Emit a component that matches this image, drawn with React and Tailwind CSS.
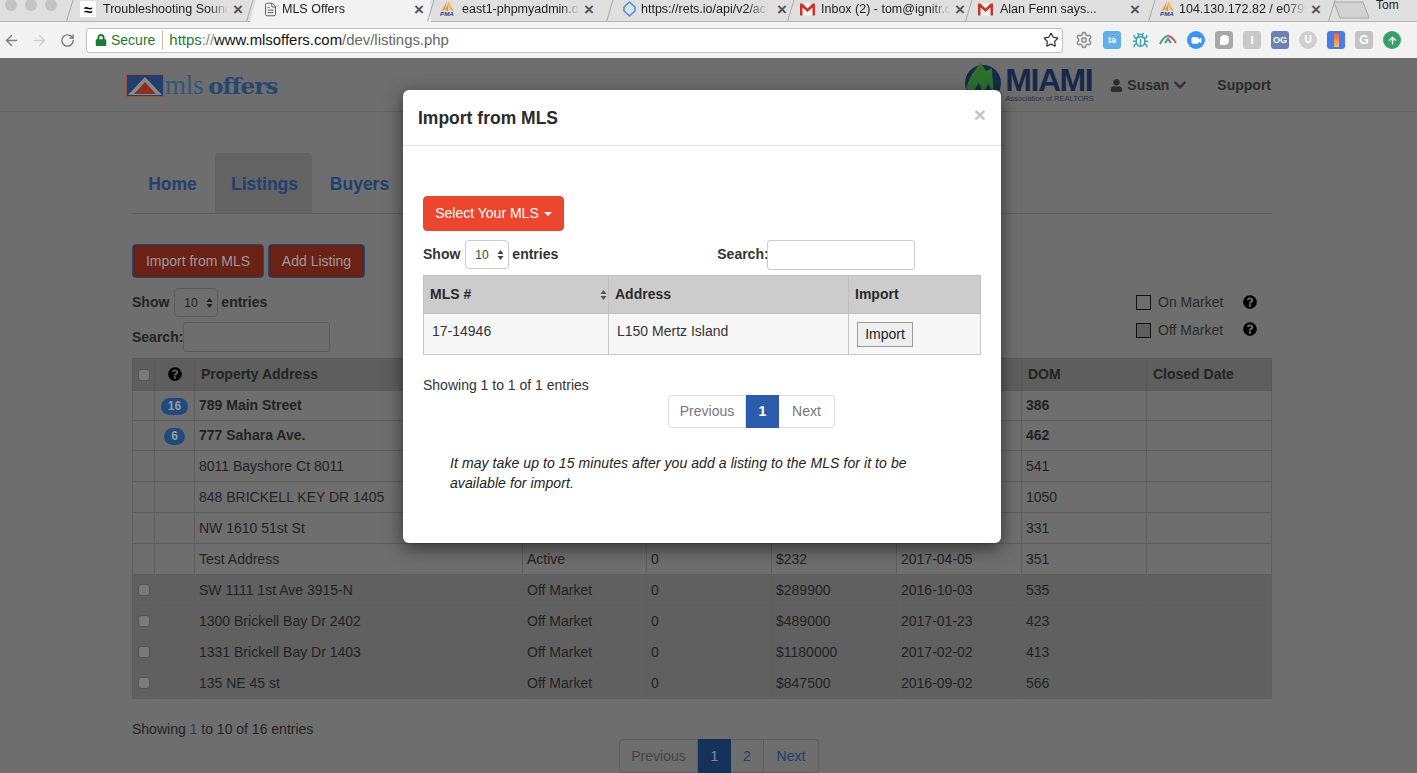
import React from 'react';
import { ArrowLeft, ArrowRight, RotateCw, Star, FileText, Settings, Bug, Video } from 'lucide-react';
import { FaLock, FaUser, FaChevronDown, FaQuestionCircle, FaArrowUp } from 'react-icons/fa';

const Pma = () => (
  <svg width="18" height="18" viewBox="0 0 18 18">
    <path d="M8 0 L5 10 L2 11 Z M10 0 L9 11 L6 11 Z" fill="#f08a1d" />
    <path d="M10.5 1 L15 11 L11 10.5 Z" fill="#f5b041" />
    <text x="0" y="17" fontSize="7" fontWeight="700" fontStyle="italic" fill="#1c3f94" fontFamily="Liberation Sans">PMA</text>
  </svg>
);
const Gmail = () => (
  <svg width="15" height="13" viewBox="0 0 15 13">
    <rect x="0" y="0.5" width="15" height="12" fill="#f2f2f2" />
    <path d="M0 .5 H2.5 L7.5 5.5 L12.5 .5 H15 V12.5 H12.5 V4.5 L7.5 9 L2.5 4.5 V12.5 H0 Z" fill="#c5352a" />
  </svg>
);
const Rets = () => (
  <svg width="15" height="16" viewBox="0 0 15 16">
    <path d="M7.5 1 L13 6 L13 10 L7.5 15 L2 10 L2 6 Z" fill="none" stroke="#4a90d9" strokeWidth="1.6" strokeLinejoin="round" />
  </svg>
);
const Wave = () => (
  <span className="flex h-4 w-4 items-center justify-center bg-white text-[15px] font-bold leading-none text-black">≈</span>
);

const tabs = [
  { w: 'w-[180px]', icon: <Wave />, pad: 'pl-[10px]', gap: 'ml-[7px]', text: 'Troubleshooting Sound Issues', tw: 'w-[125px]' },
  { w: 'w-[181px]', icon: <FileText size={15} strokeWidth={1.3} color="#444" />, pad: 'pl-[12px]', gap: 'ml-[4px]', text: 'MLS Offers', tw: 'w-[127px]', active: true },
  { w: 'w-[179px]', icon: <Pma />, pad: 'pl-[9px]', gap: 'ml-[6px]', text: 'east1-phpmyadmin.dreamhost.com', tw: 'w-[117px]' },
  { w: 'w-[181px]', icon: <Rets />, pad: 'pl-[11px]', gap: 'ml-[4px]', text: 'https://rets.io/api/v2/actris', tw: 'w-[127px]', xgap: 'ml-[9px]' },
  { w: 'w-[178px]', icon: <Gmail />, pad: 'pl-[8px]', gap: 'ml-[6px]', text: 'Inbox (2) - tom@ignitr.com', tw: 'w-[129px]' },
  { w: 'w-[183px]', icon: <Gmail />, pad: 'pl-[8px]', gap: 'ml-[7px]', text: 'Alan Fenn says...', tw: 'w-[125px]' },
  { w: 'w-[180px]', icon: <Pma />, pad: 'pl-[8px]', gap: 'ml-[3px]', text: '104.130.172.82 / e0799c8', tw: 'w-[127px]' },
];

function Tab({ t }) {
  return (
    <div className={`relative flex h-[22px] shrink-0 items-center pb-[4px] ${t.w} ${t.pad} ${t.active ? 'bg-[#f2f2f2] [clip-path:polygon(0_100%,6px_0,calc(100%-1px)_0,calc(100%+0px)_100%)]' : ''}`}>
      <span className="flex w-[16px] shrink-0 items-center justify-center">{t.icon}</span>
      <span className={`${t.gap} ${t.tw} shrink-0 overflow-hidden whitespace-nowrap text-[12.5px] leading-[14px] text-[#222] [mask-image:linear-gradient(to_right,black_85%,transparent)]`}>{t.text}</span>
      <span className={`${t.xgap || 'ml-[5px]'} text-[17px] font-bold leading-none text-[#555]`}>×</span>
    </div>
  );
}

const Sep = () => (
  <svg width="8" height="22" viewBox="0 0 8 22" className="-mx-[4px] shrink-0 relative z-10">
    <path d="M0.5 21.5 L7 0" stroke="#a8a8a8" fill="none" />
  </svg>
);

function Ext({ children, className = '' }) {
  return <span className={`flex h-[18px] w-[18px] items-center justify-center rounded-[3px] text-[9px] font-bold leading-none text-white ${className}`}>{children}</span>;
}

function Chrome() {
  return (
    <header className="h-[59px] shrink-0 border-b border-[#6d6d6d] bg-[#f2f2f2] font-['Liberation_Sans',sans-serif]">
      <div className="flex h-[22px] items-start border-b border-[#b5b5b5] bg-[#dfdfdf]">
        <div className="flex w-[70px] shrink-0 gap-[8px] pl-[5px] pt-0">
          <span className="-mt-[1px] h-[12px] w-[12px] rounded-full bg-[#c4c4c4]" />
          <span className="-mt-[1px] h-[12px] w-[12px] rounded-full bg-[#c4c4c4]" />
          <span className="-mt-[1px] h-[12px] w-[12px] rounded-full bg-[#c4c4c4]" />
        </div>
        <div className="flex h-[22px] shrink-0 items-center">
          {tabs.map((t) => (
            <React.Fragment key={t.text}>
              <Sep />
              <Tab t={t} />
            </React.Fragment>
          ))}
          <Sep />
        </div>
        <svg width="38" height="18" viewBox="0 0 38 18" className="ml-[1px] mt-[1px] shrink-0">
          <path d="M1 1 H30 L36 17 H7 Z" fill="#d2d2d2" stroke="#a8a8a8" />
        </svg>
        <span className="ml-[5px] -mt-[2px] text-[12px] leading-[14px] text-[#222]">Tom</span>
      </div>
      <div className="flex h-[36px] items-center">
        <div className="flex w-[86px] shrink-0 items-center pl-[3px]">
          <ArrowLeft size={17} color="#808080" strokeWidth={2} />
          <ArrowRight size={17} color="#cfcfcf" strokeWidth={2} className="ml-[11px]" />
          <RotateCw size={15} color="#777" strokeWidth={2.2} className="ml-[12px]" />
        </div>
        <div className="flex h-[25px] w-[977px] shrink-0 items-center rounded-[3px] border border-[#bfbfbf] bg-white pl-[8px] pr-[4px] text-[14px] leading-none">
          <FaLock size={12} color="#1d7a33" />
          <span className="ml-[4px] text-[#1d7a33]">Secure</span>
          <span className="ml-[7px] h-[18px] w-px bg-[#bdbdbd]" />
          <span className="ml-[6px] text-[14.9px] text-[#1d7a33]">https</span>
          <span className="text-[14.9px] text-[#888]">://</span>
          <span className="text-[14.9px] text-[#111]">www.mlsoffers.com</span>
          <span className="text-[14.9px] text-[#666]">/dev/listings.php</span>
          <Star size={16} color="#333" strokeWidth={1.8} className="ml-auto -mr-[1px]" />
        </div>
        <div className="ml-[12px] flex items-center gap-[10px]">
          <Ext><Settings size={18} color="#8a8a8a" strokeWidth={2} /></Ext>
          <Ext className="bg-[#62aee8]">ta</Ext>
          <Ext><Bug size={17} color="#3f9fb0" /></Ext>
          <Ext>
            <svg width="18" height="10" viewBox="0 0 18 10"><path d="M1 9 C4 3 6 1 9 1" stroke="#4aa86a" strokeWidth="2" fill="none" /><path d="M9 1 C12 1 14 3 17 8" stroke="#d9574a" strokeWidth="2" fill="none" /><path d="M6 8 L9 4 L12 8" stroke="#3f87d9" strokeWidth="2" fill="none" /></svg>
          </Ext>
          <Ext className="rounded-full bg-[#3d95f2]"><Video size={11} fill="white" color="white" /></Ext>
          <Ext className="bg-[#a9a9a9]"><span className="h-[10px] w-[9px] rounded-[5px_5px_5px_1px] bg-white" /></Ext>
          <Ext className="bg-[#c8c8c8] text-[11px]">I</Ext>
          <Ext className="bg-[#6c83ad] text-[8px]">OG</Ext>
          <Ext className="rounded-full bg-[#cfcfcf] text-[10px]">U</Ext>
          <Ext className="bg-[#4c7be8]"><span className="h-[14px] w-[5px] bg-gradient-to-b from-[#e35d4f] to-[#f2c14e]" /></Ext>
          <Ext className="bg-[#c4c4c4] text-[12px]">G</Ext>
          <Ext className="rounded-full bg-[#37a06a]"><FaArrowUp size={9} color="white" /></Ext>
        </div>
      </div>
    </header>
  );
}

const Updown = ({ color = '#333' }) => (
  <svg width="7" height="12" viewBox="0 0 7 12" className="shrink-0">
    <path d="M3.5 1 L6.5 5 H.5 Z M3.5 11 L.5 7 H6.5 Z" fill={color} />
  </svg>
);

function LenSelect({ light }) {
  return (
    <span className={`ml-[5px] mr-[3px] flex h-[29px] w-[44px] items-center justify-between rounded-[4px] border pl-[9px] pr-[4px] text-[12px] font-normal ${light ? 'border-[#ccc] bg-white text-[#444]' : 'border-[#5b5b5b] text-[#222]'}`}>
      10 <Updown color={light ? '#444' : '#222'} />
    </span>
  );
}

const cols = ['w-[22px]', 'w-[40px]', 'w-[328px]', 'w-[124px]', 'w-[125px]', 'w-[125px]', 'w-[125px]', 'w-[125px]', 'w-[125px]'];
const rows = [
  { badge: '16', addr: '789 Main Street', st: 'Active', of: '16', pr: '$450000', dt: '2016-03-11', dom: '386', b: true },
  { badge: '6', addr: '777 Sahara Ave.', st: 'Active', of: '6', pr: '$325000', dt: '2016-01-29', dom: '462', b: true },
  { addr: '8011 Bayshore Ct 8011', st: 'Active', of: '0', pr: '$399000', dt: '2016-10-20', dom: '541' },
  { addr: '848 BRICKELL KEY DR 1405', st: 'Active', of: '0', pr: '$615000', dt: '2014-05-03', dom: '1050' },
  { addr: 'NW 1610 51st St', st: 'Active', of: '0', pr: '$120000', dt: '2016-05-28', dom: '331' },
  { addr: 'Test Address', st: 'Active', of: '0', pr: '$232', dt: '2017-04-05', dom: '351' },
  { addr: 'SW 1111 1st Ave 3915-N', st: 'Off Market', of: '0', pr: '$289900', dt: '2016-10-03', dom: '535', off: true },
  { addr: '1300 Brickell Bay Dr 2402', st: 'Off Market', of: '0', pr: '$489000', dt: '2017-01-23', dom: '423', off: true },
  { addr: '1331 Brickell Bay Dr 1403', st: 'Off Market', of: '0', pr: '$1180000', dt: '2017-02-02', dom: '413', off: true },
  { addr: '135 NE 45 st', st: 'Off Market', of: '0', pr: '$847500', dt: '2016-09-02', dom: '566', off: true },
];

const Box = () => <span className="block h-[12px] w-[12px] rounded-[3px] border border-[#555] bg-[#7a7a7a]" />;

function Listings() {
  const th = 'border border-[#5a5a5a] pl-[6px] text-left font-bold';
  const td = 'border border-[#5e5e5e] pl-[4px] align-middle';
  return (
    <table className="w-[1139px] table-fixed border-collapse text-[14px] text-[#232323]">
      <colgroup>{cols.map((c, i) => <col key={i} className={c} />)}</colgroup>
      <thead>
        <tr className="h-[32px] bg-[#5e5e5e]">
          <th className="border border-[#5a5a5a] pl-[5px]"><Box /></th>
          <th className="border border-[#5a5a5a]"><FaQuestionCircle size={14} color="#000" className="mx-auto -mt-[2px]" /></th>
          <th className={th}>Property Address</th>
          <th className={th}>Status</th>
          <th className={th}>Offers</th>
          <th className={th}>Price</th>
          <th className={th}>List Date</th>
          <th className={th}>DOM</th>
          <th className={th}>Closed Date</th>
        </tr>
      </thead>
      <tbody>
        {rows.map((r, i) => (
          <tr key={r.addr} className={`${i < 2 ? 'h-[30px]' : 'h-[31px]'} ${r.off ? 'bg-[#606060]' : 'bg-[#6e6e6e]'} ${r.b ? 'font-bold' : ''}`}>
            <td className={`${td} pl-[5px]`}>{r.off && <Box />}</td>
            <td className="border border-[#5e5e5e] text-center">
              {r.badge && (
                <span className={`inline-block h-[17px] rounded-full bg-[#1f4a7d] text-[12px] font-bold leading-[17px] text-[#9a9a9a] ${r.badge === '16' ? 'w-[27px]' : 'w-[21px]'}`}>{r.badge}</span>
              )}
            </td>
            <td className={td}>{r.addr}</td>
            <td className={td}>{r.st}</td>
            <td className={td}>{r.of}</td>
            <td className={td}>{r.pr}</td>
            <td className={td}>{r.dt}</td>
            <td className={td}>{r.dom}</td>
            <td className={td}></td>
          </tr>
        ))}
      </tbody>
    </table>
  );
}

function Page() {
  return (
    <main className="ml-[132px] w-[1140px] text-[14px] text-[#232323]">
      <div className="flex h-[53px] items-center border-b border-[#646464] -mr-[145px] -ml-[132px] pl-[126px] pr-[146px]">
        <div className="flex items-center">
          <svg width="38" height="23" viewBox="0 0 38 23" className="shrink-0">
            <rect x=".5" y=".5" width="37" height="22" fill="#1f3f6e" stroke="#a5503d" />
            <path d="M2 21 L19 3 L36 21 Z" fill="#8a8a8a" />
            <path d="M8 20 L19 8 L30 20 Z" fill="#8e2f1c" />
          </svg>
          <span className="ml-[1px] font-['Liberation_Serif',serif] text-[27px] leading-none tracking-[-0.3px] text-[#35557a]">mls</span>
          <span className="ml-[5px] font-['DejaVu_Serif',serif] text-[23px] font-bold leading-none tracking-[-0.9px] text-[#25476f]">offers</span>
        </div>
        <div className="ml-auto flex items-center">
          <div className="flex items-center">
            <svg width="42" height="40" viewBox="0 0 42 40" className="-mt-[6px] shrink-0">
              <circle cx="20" cy="21" r="18" fill="#15294a" />
              <path d="M3 27 C6 15 12 7 18 1 L23 9 L29 6 C29 15 31 22 30 30 L25 22 L20 32 L16 21 L10 30 Z" fill="#2d6f2c" />
            </svg>
            <div className="flex w-[87px] flex-col">
              <span className="text-[32px] font-bold leading-[27px] tracking-[-1.5px] text-[#15294a]">MIAMI</span>
              <span className="whitespace-nowrap text-[7.5px] leading-[9px] text-[#2a3548]">Association of REALTORS</span>
            </div>
          </div>
          <FaUser size={13} color="#2d2d2d" className="ml-[18px]" />
          <span className="ml-[4px] font-bold text-[#2a2a2a]">Susan</span>
          <FaChevronDown size={14} color="#2d2d2d" className="ml-[4px]" />
          <span className="ml-[30px] font-bold text-[#2a2a2a]">Support</span>
        </div>
      </div>

      <nav className="mt-[41px] flex h-[61px] items-stretch border-b border-[#5e5e5e] text-[17.5px] font-bold text-[#20406f]">
        <span className="flex w-[83px] items-center justify-center pr-[2px] pt-[2px]">Home</span>
        <span className="flex w-[97px] items-center justify-center rounded-t-[4px] bg-[#636363] pl-[2px] pt-[2px]">Listings</span>
        <span className="flex w-[93px] items-center justify-center pl-[2px] pt-[2px]">Buyers</span>
      </nav>

      <div className="mt-[30px] flex gap-[4px]">
        <span className="flex h-[34px] w-[132px] items-center justify-center rounded-[4px] border border-[#1e4a70] bg-[#6a2116] text-[#9c9c9c]">Import from MLS</span>
        <span className="flex h-[34px] w-[97px] items-center justify-center rounded-[4px] border border-[#1e4a70] bg-[#6a2116] text-[#9c9c9c]">Add Listing</span>
      </div>

      <div className="mt-[10px] flex justify-between">
        <div>
          <div className="flex h-[29px] items-center font-bold">Show <LenSelect /> entries</div>
          <div className="mt-[5px] flex h-[30px] items-center font-bold">
            Search:
            <span className="block h-[30px] w-[147px] rounded-[3px] border border-[#5b5b5b]" />
          </div>
        </div>
        <div className="mr-[15px] mt-[6px] flex flex-col gap-[11px] text-[#2a2a2a]">
          <label className="flex h-[17px] items-center">
            <span className="h-[15px] w-[15px] border border-[#111]" />
            <span className="ml-[7px] w-[85px]">On Market</span>
            <FaQuestionCircle size={14} color="#000" className="-mt-[2px]" />
          </label>
          <label className="flex h-[17px] items-center">
            <span className="h-[15px] w-[15px] border border-[#111] bg-[#5e5e5e]" />
            <span className="ml-[7px] w-[85px]">Off Market</span>
            <FaQuestionCircle size={14} color="#000" className="-mt-[3px]" />
          </label>
        </div>
      </div>

      <div className="mt-[6px]"><Listings /></div>

      <p className="mt-[22px] leading-[16px]">Showing <span className="text-[#20406f]">1</span> to 10 of 16 entries</p>
      <div className="mt-[2px] flex justify-center pl-[34px]">
        <div className="flex h-[34px] text-[#20406f]">
          <span className="flex w-[79px] items-center justify-center rounded-l-[4px] border border-[#5e5e5e] text-[#444]">Previous</span>
          <span className="flex w-[33px] items-center justify-center bg-[#14325a] text-[#8a8a8a]">1</span>
          <span className="flex w-[33px] items-center justify-center border border-l-0 border-[#5e5e5e]">2</span>
          <span className="flex w-[55px] items-center justify-center rounded-r-[4px] border border-l-0 border-[#5e5e5e]">Next</span>
        </div>
      </div>
    </main>
  );
}

function Modal() {
  return (
    <section className="absolute left-[403px] top-[31px] h-[453px] w-[598px] rounded-[6px] bg-white text-[14px] text-[#333] shadow-[0_5px_18px_rgba(0,0,0,0.55)]">
      <div className="flex h-[56px] items-center justify-between border-b border-[#e5e5e5] pl-[15px] pr-[15px]">
        <h2 className="pt-[2px] text-[17.5px] font-bold leading-none text-[#2b2b2b]">Import from MLS</h2>
        <span className="-mt-[6px] text-[21px] font-bold leading-none text-[#c4c4c4]">×</span>
      </div>
      <div className="pl-[20px] pr-[20px]">
        <div className="mt-[50px] flex h-[35px] w-[141px] items-center justify-center rounded-[4px] border border-[#dc4a32] bg-[#ed462e] text-white">
          Select Your MLS
          <span className="ml-[5px] mt-[1px] h-0 w-0 border-x-[4px] border-t-[4px] border-x-transparent border-t-white" />
        </div>
        <div className="mt-[9px] flex h-[30px] items-center pb-[1px] font-bold">
          Show <LenSelect light /> entries
          <span className="ml-[159px]">Search:</span>
          <span className="-ml-[2px] block h-[30px] w-[148px] shrink-0 rounded-[3px] border border-[#ccc] bg-white" />
        </div>
        <table className="mt-[5px] w-[557px] table-fixed border-collapse">
          <colgroup><col className="w-[185px]" /><col className="w-[240px]" /><col className="w-[132px]" /></colgroup>
          <thead>
            <tr className="h-[38px] bg-[#cccccc] text-left font-bold text-[#2a2a2a]">
              <th className="border border-[#c0c0c0] pl-[6px] pr-[1px]">
                <span className="flex items-center justify-between">MLS # <Updown color="#555" /></span>
              </th>
              <th className="border border-[#c0c0c0] pl-[6px]">Address</th>
              <th className="border border-[#c0c0c0] pl-[6px]">Import</th>
            </tr>
          </thead>
          <tbody>
            <tr className="h-[41px] bg-[#f7f7f7]">
              <td className="border border-[#c8c8c8] pb-[5px] pl-[8px]">17-14946</td>
              <td className="border border-[#c8c8c8] pb-[5px] pl-[8px]">L150 Mertz Island</td>
              <td className="border border-[#c8c8c8] pl-[8px]">
                <span className="flex h-[25px] w-[56px] items-center justify-center border border-[#9a9a9a] bg-[#efefef] text-[#222]">Import</span>
              </td>
            </tr>
          </tbody>
        </table>
        <p className="mt-[22px] leading-[16px]">Showing 1 to 1 of 1 entries</p>
        <div className="mt-[2px] flex h-[33px] w-[167px] translate-x-[245px]">
          <span className="flex w-[78px] items-center justify-center rounded-l-[4px] border border-[#ddd] text-[#777]">Previous</span>
          <span className="flex w-[33px] items-center justify-center bg-[#2a5cab] font-bold text-white">1</span>
          <span className="flex w-[56px] items-center justify-center rounded-r-[4px] border border-l-0 border-[#ddd] text-[#777]">Next</span>
        </div>
        <p className="mt-[26px] w-[490px] pl-[27px] text-[14px] italic leading-[19.5px] tracking-[0.08px] text-[#222]">
          It may take up to 15 minutes after you add a listing to the MLS for it to be available for import.
        </p>
      </div>
    </section>
  );
}

export default function App() {
  return (
    <div className="flex h-[773px] w-[1417px] flex-col overflow-hidden bg-[#6e6e6e] font-['Liberation_Sans',sans-serif]">
      <Chrome />
      <div className="relative flex-1">
        <Page />
        <Modal />
      </div>
    </div>
  );
}
